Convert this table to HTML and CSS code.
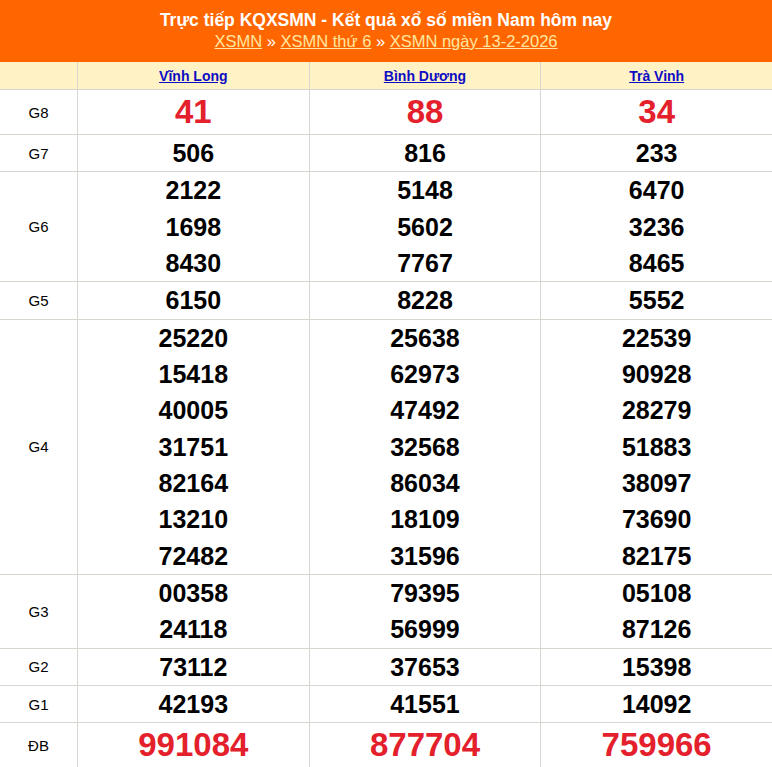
FILE: index.html
```html
<!DOCTYPE html>
<html lang="vi">
<head>
<meta charset="utf-8">
<title>KQXSMN</title>
<link rel="stylesheet" href="styles.css">
</head>
<body>
<div class="page">
  <div class="banner">
    <h1 class="title">Trực tiếp KQXSMN - Kết quả xổ số miền Nam hôm nay</h1>
    <div class="crumbs"><a href="#">XSMN</a> » <a href="#">XSMN thứ 6</a> » <a href="#">XSMN ngày 13-2-2026</a></div>
  </div>
  <table class="results">
    <colgroup><col class="c-label"><col><col><col></colgroup>
    <thead>
      <tr class="head">
        <th></th>
        <th><a href="#">Vĩnh Long</a></th>
        <th><a href="#">Bình Dương</a></th>
        <th><a href="#">Trà Vinh</a></th>
      </tr>
    </thead>
    <tbody>
      <tr class="big">
        <td class="lbl">G8</td>
        <td><div class="n red">41</div></td>
        <td><div class="n red">88</div></td>
        <td><div class="n red">34</div></td>
      </tr>
      <tr>
        <td class="lbl">G7</td>
        <td><div class="n">506</div></td>
        <td><div class="n">816</div></td>
        <td><div class="n">233</div></td>
      </tr>
      <tr>
        <td class="lbl">G6</td>
        <td><div class="n">2122</div><div class="n">1698</div><div class="n">8430</div></td>
        <td><div class="n">5148</div><div class="n">5602</div><div class="n">7767</div></td>
        <td><div class="n">6470</div><div class="n">3236</div><div class="n">8465</div></td>
      </tr>
      <tr>
        <td class="lbl">G5</td>
        <td><div class="n">6150</div></td>
        <td><div class="n">8228</div></td>
        <td><div class="n">5552</div></td>
      </tr>
      <tr>
        <td class="lbl">G4</td>
        <td><div class="n">25220</div><div class="n">15418</div><div class="n">40005</div><div class="n">31751</div><div class="n">82164</div><div class="n">13210</div><div class="n">72482</div></td>
        <td><div class="n">25638</div><div class="n">62973</div><div class="n">47492</div><div class="n">32568</div><div class="n">86034</div><div class="n">18109</div><div class="n">31596</div></td>
        <td><div class="n">22539</div><div class="n">90928</div><div class="n">28279</div><div class="n">51883</div><div class="n">38097</div><div class="n">73690</div><div class="n">82175</div></td>
      </tr>
      <tr>
        <td class="lbl">G3</td>
        <td><div class="n">00358</div><div class="n">24118</div></td>
        <td><div class="n">79395</div><div class="n">56999</div></td>
        <td><div class="n">05108</div><div class="n">87126</div></td>
      </tr>
      <tr>
        <td class="lbl">G2</td>
        <td><div class="n">73112</div></td>
        <td><div class="n">37653</div></td>
        <td><div class="n">15398</div></td>
      </tr>
      <tr>
        <td class="lbl">G1</td>
        <td><div class="n">42193</div></td>
        <td><div class="n">41551</div></td>
        <td><div class="n">14092</div></td>
      </tr>
      <tr class="big">
        <td class="lbl">ĐB</td>
        <td><div class="n red">991084</div></td>
        <td><div class="n red">877704</div></td>
        <td><div class="n red">759966</div></td>
      </tr>
    </tbody>
  </table>
</div>
</body>
</html>
```
FILE: styles.css
```css
html, body {
  margin: 0;
  padding: 0;
  background: #fff;
}
body {
  font-family: "Liberation Sans", Arial, sans-serif;
  color: #000;
}
.page {
  width: 772px;
}
.banner {
  background: #ff6600;
  height: 62px;
  box-sizing: border-box;
  padding-top: 9px;
  text-align: center;
}
.title {
  margin: 0;
  font-size: 17.5px;
  line-height: 22px;
  font-weight: bold;
  color: #fff;
}
.crumbs {
  font-size: 16.5px;
  line-height: 21px;
  color: #fff;
}
.crumbs a {
  color: #ffe6a0;
  text-decoration: underline;
}
.results {
  width: 772px;
  border-collapse: separate;
  border-spacing: 0;
  table-layout: fixed;
}
.c-label {
  width: 77px;
}
.results th,
.results td {
  padding: 0;
  text-align: center;
  vertical-align: middle;
  border-bottom: 1px solid #d9d5cf;
}
.results th + th,
.results td + td {
  border-left: 1px solid #d9d5cf;
}
.head th {
  background: #fff2c4;
  height: 27px;
}
.head a {
  color: #0c0cc4;
  font-size: 14px;
  font-weight: bold;
  text-decoration: underline;
}
.lbl {
  font-size: 15px;
}
.n {
  font-size: 25px;
  font-weight: bold;
  line-height: 36.33px;
}
.big td {
  height: 44px;
}
.big .n {
  font-size: 33px;
  line-height: 44px;
}
.red {
  color: #e3202b;
}
```
